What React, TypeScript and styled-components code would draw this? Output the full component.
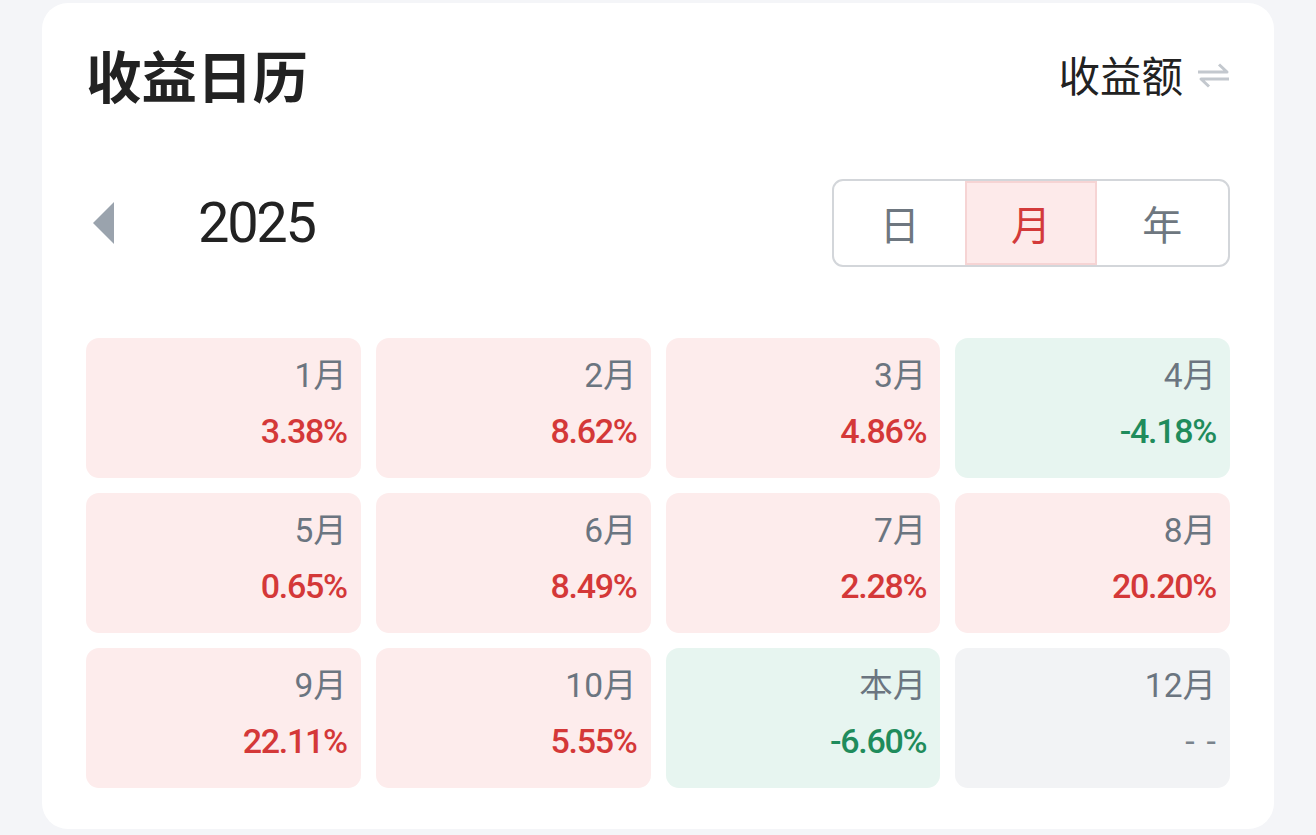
import React from "react";
import styled, { createGlobalStyle } from "styled-components";

const Global = createGlobalStyle`
  html, body { margin: 0; padding: 0; background: #f4f5f8; }
  body { font-family: Roboto, "Noto Sans CJK SC", sans-serif; }
  #root { padding: 3px 42px 6px 42px; }
`;

const Card = styled.div`
  background: #fff;
  border-radius: 26px;
  padding: 40px 44px 42px 44px;
  box-sizing: border-box;
  height: 826px;
`;

const Header = styled.div`
  display: flex;
  align-items: center;
  justify-content: space-between;
  height: 64px;
`;

const Title = styled.h1`
  margin: 0;
  font-size: 55.5px;
  line-height: 1;
  font-weight: 700;
  color: #222;
  font-family: "Noto Sans CJK SC", sans-serif;
`;

const Toggle = styled.div`
  display: flex;
  align-items: center;
  gap: 14px;
  font-size: 41.5px;
  line-height: 1;
  color: #222;
  font-family: "Noto Sans CJK SC", sans-serif;
`;

const YearRow = styled.div`
  display: flex;
  align-items: center;
  justify-content: space-between;
  margin-top: 72px;
  height: 88px;
`;

const YearNav = styled.div`
  display: flex;
  align-items: center;
  padding-left: 7px;
`;

const Year = styled.span`
  margin-left: 83px;
  font-size: 56px;
  line-height: 1;
  color: #222;
  letter-spacing: -2.3px;
  font-family: Roboto, sans-serif;
`;

const Segments = styled.div`
  display: flex;
  height: 88px;
  width: 398px;
  box-sizing: border-box;
  border: 2.5px solid #d3d6da;
  border-radius: 11px;
  overflow: hidden;
`;

const Segment = styled.div<{ $active?: boolean }>`
  flex: 1;
  display: flex;
  align-items: center;
  justify-content: center;
  font-size: 40px;
  font-family: "Noto Sans CJK SC", sans-serif;
  color: ${(p) => (p.$active ? "#d33a3a" : "#6e7780")};
  background: ${(p) => (p.$active ? "#fdeaea" : "transparent")};
  box-shadow: ${(p) => (p.$active ? "inset 0 0 0 2px #f6d4d4" : "none")};
`;

const Grid = styled.div`
  display: grid;
  grid-template-columns: repeat(4, 1fr);
  grid-auto-rows: 140px;
  gap: 15px;
  margin-top: 71px;
`;

type Tone = "up" | "down" | "none";

const Tile = styled.div<{ $tone: Tone }>`
  border-radius: 13px;
  background: ${(p) =>
    p.$tone === "up" ? "#fdecec" : p.$tone === "down" ? "#e7f5f0" : "#f2f3f5"};
  display: flex;
  flex-direction: column;
  align-items: flex-end;
  padding: 17px 14px 0 0;
`;

const Month = styled.div`
  font-size: 33.5px;
  line-height: 42px;
  color: #6b7580;
  font-family: Roboto, "Noto Sans CJK SC", sans-serif;
`;

const Value = styled.div<{ $tone: Tone }>`
  margin-top: 13px;
  font-size: 34px;
  line-height: 42px;
  font-weight: 500;
  letter-spacing: -1.3px;
  white-space: nowrap;
  font-family: Roboto, sans-serif;
  color: ${(p) =>
    p.$tone === "up" ? "#d43838" : p.$tone === "down" ? "#1f8c5c" : "#7a838c"};
`;

const Dashes = styled.span`
  display: inline-flex;
  gap: 12px;
  font-weight: 400;
  letter-spacing: 0;
`;

const data: { m: string; v: string; t: Tone }[] = [
  { m: "1月", v: "3.38%", t: "up" },
  { m: "2月", v: "8.62%", t: "up" },
  { m: "3月", v: "4.86%", t: "up" },
  { m: "4月", v: "-4.18%", t: "down" },
  { m: "5月", v: "0.65%", t: "up" },
  { m: "6月", v: "8.49%", t: "up" },
  { m: "7月", v: "2.28%", t: "up" },
  { m: "8月", v: "20.20%", t: "up" },
  { m: "9月", v: "22.11%", t: "up" },
  { m: "10月", v: "5.55%", t: "up" },
  { m: "本月", v: "-6.60%", t: "down" },
  { m: "12月", v: "- -", t: "none" },
];

const SwapIcon = () => (
  <svg width="33" height="28" viewBox="0 0 33 28" fill="none">
    <path d="M1 11 H30 L22 3.5" stroke="#c3c8ce" strokeWidth="3" strokeLinejoin="round" />
    <path d="M32 18 H4 L12 25.5" stroke="#c3c8ce" strokeWidth="3" strokeLinejoin="round" />
  </svg>
);

const LeftTriangle = () => (
  <svg width="22" height="42" viewBox="0 0 22 42">
    <polygon points="21,0 21,42 0,21" fill="#9aa3ad" />
  </svg>
);

export default function App() {
  return (
    <>
      <Global />
      <Card>
        <Header>
          <Title>收益日历</Title>
          <Toggle>
            收益额
            <SwapIcon />
          </Toggle>
        </Header>
        <YearRow>
          <YearNav>
            <LeftTriangle />
            <Year>2025</Year>
          </YearNav>
          <Segments>
            <Segment>日</Segment>
            <Segment $active>月</Segment>
            <Segment>年</Segment>
          </Segments>
        </YearRow>
        <Grid>
          {data.map((d) => (
            <Tile key={d.m} $tone={d.t}>
              <Month>{d.m}</Month>
              <Value $tone={d.t}>
                {d.t === "none" ? (
                  <Dashes>
                    <span>-</span>
                    <span>-</span>
                  </Dashes>
                ) : (
                  d.v
                )}
              </Value>
            </Tile>
          ))}
        </Grid>
      </Card>
    </>
  );
}
